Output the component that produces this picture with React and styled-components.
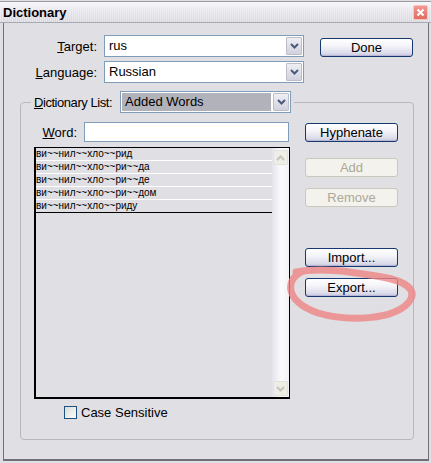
import React from "react";
import styled, { createGlobalStyle } from "styled-components";

const GlobalStyle = createGlobalStyle`
  html, body {
    margin: 0;
    padding: 0;
    background: #e0dfe3;
  }
  body {
    width: 431px;
    height: 463px;
    overflow: hidden;
    font-family: "Liberation Sans", Arial, sans-serif;
    font-size: 13px;
    color: #000;
  }
  * { box-sizing: border-box; }
`;

const words = [
  "ви~~нил~~хло~~рид",
  "ви~~нил~~хло~~ри~~да",
  "ви~~нил~~хло~~ри~~де",
  "ви~~нил~~хло~~ри~~дом",
  "ви~~нил~~хло~~риду",
];

function Chevron({ color = "#4a5a7c" }) {
  return (
    <svg width="9" height="6" viewBox="0 0 9 6">
      <path d="M1 1 L4.5 4.5 L8 1" fill="none" stroke={color} strokeWidth="2" />
    </svg>
  );
}

function ChevronUp({ color = "#c6c5bb" }) {
  return (
    <svg width="9" height="6" viewBox="0 0 9 6">
      <path d="M1 5 L4.5 1.5 L8 5" fill="none" stroke={color} strokeWidth="2" />
    </svg>
  );
}

function Combo({ value, shaded, width }) {
  return (
    <ComboBox $width={width}>
      <ComboText $shaded={shaded}>{value}</ComboText>
      <ComboArrow>
        <Chevron />
      </ComboArrow>
    </ComboBox>
  );
}

export default function App() {
  return (
    <>
      <GlobalStyle />
      <Window>
        <TitleBar>
          <Title>Dictionary</Title>
          <CloseButton>
            <svg width="9" height="9" viewBox="0 0 9 9">
              <path d="M1.5 1.5 L7.5 7.5 M7.5 1.5 L1.5 7.5" stroke="#fff" strokeWidth="2" />
            </svg>
          </CloseButton>
        </TitleBar>
        <Body>
          <TopGrid>
            <Label>
              <u>T</u>arget:
            </Label>
            <Combo value="rus" width={200} />
            <Button>Done</Button>
            <Label>
              <u>L</u>anguage:
            </Label>
            <Combo value="Russian" width={200} />
          </TopGrid>

          <Group>
            <GroupHeader>
              <HeaderLabel>
                <u>D</u>ictionary List:
              </HeaderLabel>
              <Combo value="Added Words" shaded width={171} />
            </GroupHeader>
            <GroupContent>
              <LeftCol>
                <WordRow>
                  <Label as="span">
                    <u>W</u>ord:
                  </Label>
                  <TextInput />
                </WordRow>
                <List>
                  <Rows>
                    {words.map((w, i) => (
                      <Row key={i} $last={i === words.length - 1}>
                        {w}
                      </Row>
                    ))}
                  </Rows>
                  <ScrollBar>
                    <ScrollArrow>
                      <ChevronUp />
                    </ScrollArrow>
                    <ScrollArrow>
                      <Chevron color="#c6c5bb" />
                    </ScrollArrow>
                  </ScrollBar>
                </List>
                <CheckRow>
                  <CheckBox />
                  <span>Case Sensitive</span>
                </CheckRow>
              </LeftCol>
              <RightCol>
                <Button $top={1}>Hyphenate</Button>
                <Button $top={16} disabled>
                  Add
                </Button>
                <Button $top={11} disabled>
                  Remove
                </Button>
                <Button $top={41}>Import...</Button>
                <Button $top={11}>Export...</Button>
              </RightCol>
            </GroupContent>
          </Group>
        </Body>
        <Scribble viewBox="0 0 431 463" width="431" height="463">
          <path
            d="M 303 271 C 285 279, 284 301, 318 313 C 348 322, 394 320, 409 302 C 418 290, 406 281, 382 277 C 352 272, 322 267, 296 272"
            fill="none"
            stroke="#ee8585"
            strokeWidth="7"
            strokeLinecap="round"
            opacity="0.8"
          />
        </Scribble>
      </Window>
    </>
  );
}

const Window = styled.div`
  position: relative;
  width: 431px;
  height: 463px;
  display: flex;
  flex-direction: column;
  background: #e0dfe3;
`;

const TitleBar = styled.div`
  height: 22px;
  margin-top: 1px;
  display: flex;
  align-items: center;
  justify-content: space-between;
  padding: 0 3px 0 3px;
  border-top: 1px solid #9a9aa2;
  border-bottom: 1px solid #a9a9b1;
  background:
    repeating-linear-gradient(90deg, rgba(255, 255, 255, 0.35) 0 1px, transparent 1px 2px),
    linear-gradient(#f6f6fa, #e4e4ec 45%, #d7d7df);
`;

const Title = styled.span`
  font-weight: bold;
  font-size: 13px;
`;

const CloseButton = styled.span`
  width: 15px;
  height: 15px;
  display: flex;
  align-items: center;
  justify-content: center;
  border: 1px solid #f6c4c0;
  border-radius: 2px;
  background: linear-gradient(#f29890, #e26a62);
`;

const Body = styled.div`
  flex: 1;
  display: flex;
  flex-direction: column;
  margin: 0 2px 2px 3px;
  border-left: 1px solid #6f6f77;
  border-right: 1px solid #6f6f77;
  border-bottom: 2px solid #6f6f77;
`;

const TopGrid = styled.div`
  display: grid;
  grid-template-columns: 100px 216px 93px;
  grid-auto-rows: 22px;
  row-gap: 4px;
  padding-top: 12px;
`;

const Label = styled.label`
  align-self: center;
  text-align: right;
  padding-right: 7px;
  white-space: nowrap;
`;

const HeaderLabel = styled.span`
  letter-spacing: -0.45px;
  white-space: nowrap;
`;

const ComboBox = styled.div`
  width: ${(p) => p.$width}px;
  height: 22px;
  display: flex;
  border: 1px solid #7f9db9;
  background: #fff;
  padding: 1px;
`;

const ComboText = styled.div`
  flex: 1;
  padding: 0 3px;
  line-height: 18px;
  font-size: 13px;
  background: ${(p) => (p.$shaded ? "#b2b2ba" : "#fff")};
  margin-right: ${(p) => (p.$shaded ? "2px" : "0")};
`;

const ComboArrow = styled.div`
  width: 16px;
  display: flex;
  align-items: center;
  justify-content: center;
  border: 1px solid #bdbdca;
  border-radius: 1px;
  background: linear-gradient(#eeeef4, #d2d2de);
`;

const Button = styled.button`
  width: 93px;
  height: 19px;
  margin-top: ${(p) => (p.$top !== undefined ? p.$top : 3)}px;
  padding: 0;
  font-family: "Liberation Sans", Arial, sans-serif;
  font-size: 13px;
  line-height: 17px;
  color: #000;
  border: 1px solid #15396e;
  border-radius: 3px;
  background: linear-gradient(#ffffff, #f4f4f9 40%, #dedeec 80%, #c9c9de);
  box-shadow: inset 0 -1px 0 #b8b8d6;

  &:disabled {
    color: #aca899;
    border-color: #cac8bb;
    background: #f3f2ec;
    box-shadow: none;
  }
`;

const Group = styled.div`
  margin: 19px 14px 0 16px;
  border: 1px solid #b7b7be;
  border-radius: 4px;
  padding: 0 14px 19px 13px;
`;

const GroupHeader = styled.div`
  display: flex;
  align-items: center;
  gap: 8px;
  width: fit-content;
  margin: -12px 0 0 -3px;
  padding: 0 3px;
  background: #e0dfe3;
`;

const GroupContent = styled.div`
  display: flex;
  gap: 15px;
  margin-top: 9px;
`;

const LeftCol = styled.div`
  width: 256px;
  display: flex;
  flex-direction: column;
`;

const WordRow = styled.div`
  display: flex;
  align-items: center;
  justify-content: flex-end;
  padding-right: 1px;
`;

const TextInput = styled.div`
  width: 205px;
  height: 20px;
  border: 1px solid #7f9db9;
  background: #fff;
`;

const List = styled.div`
  margin-top: 5px;
  height: 252px;
  display: flex;
  border: 1px solid #000;
  border-left-width: 2px;
  border-bottom-width: 2px;
`;

const Rows = styled.div`
  flex: 1;
  display: flex;
  flex-direction: column;
`;

const Row = styled.div`
  height: 13px;
  line-height: 12px;
  font-size: 10px;
  white-space: nowrap;
  border-bottom: 1px solid ${(p) => (p.$last ? "#000" : "#fff")};
`;

const ScrollBar = styled.div`
  width: 17px;
  display: flex;
  flex-direction: column;
  justify-content: space-between;
  padding: 2px 1px 1px 1px;
  background: linear-gradient(90deg, #e4e4ee, #fbfbfd 55%, #f2f2f7);
`;

const ScrollArrow = styled.div`
  height: 15px;
  display: flex;
  align-items: center;
  justify-content: center;
  border: 1px solid #e3e2da;
  border-radius: 1px;
  background: #eeede6;
`;

const CheckRow = styled.div`
  display: flex;
  align-items: center;
  gap: 4px;
  margin-top: 6px;
  padding-left: 30px;
`;

const CheckBox = styled.span`
  width: 13px;
  height: 13px;
  border: 1px solid #1c5180;
  background: linear-gradient(135deg, #dcdcd6, #fdfdfb);
`;

const RightCol = styled.div`
  display: flex;
  flex-direction: column;
`;

const Scribble = styled.svg`
  position: absolute;
  top: 0;
  left: 0;
  pointer-events: none;
  filter: blur(0.4px);
`;
